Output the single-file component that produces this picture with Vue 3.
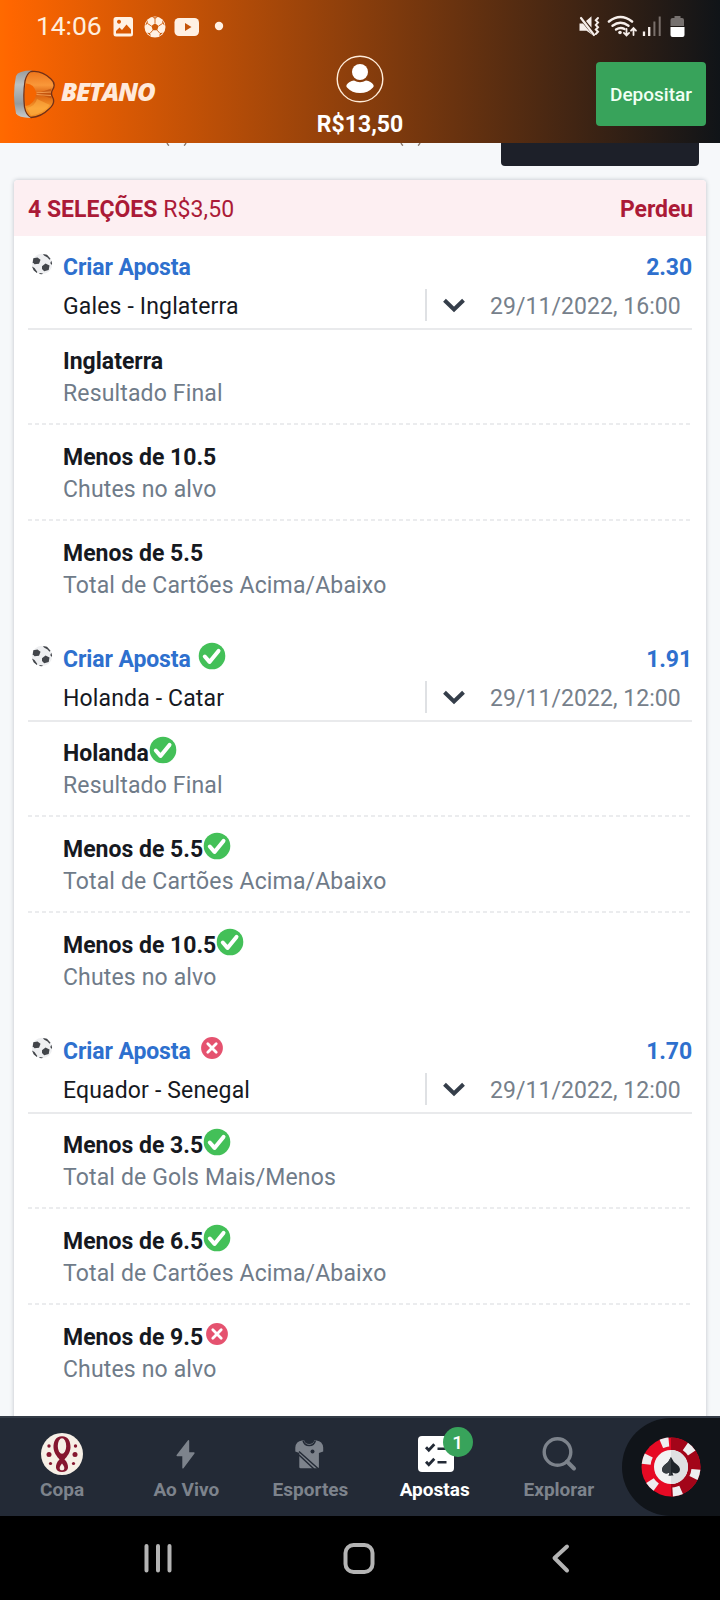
<script setup>
const events = [
  {
    match: 'Gales - Inglaterra', odds: '2.30', date: '29/11/2022, 16:00', status: null,
    picks: [
      { name: 'Inglaterra', market: 'Resultado Final', status: null },
      { name: 'Menos de 10.5', market: 'Chutes no alvo', status: null },
      { name: 'Menos de 5.5', market: 'Total de Cartões Acima/Abaixo', status: null },
    ],
  },
  {
    match: 'Holanda - Catar', odds: '1.91', date: '29/11/2022, 12:00', status: 'won',
    picks: [
      { name: 'Holanda', market: 'Resultado Final', status: 'won' },
      { name: 'Menos de 5.5', market: 'Total de Cartões Acima/Abaixo', status: 'won' },
      { name: 'Menos de 10.5', market: 'Chutes no alvo', status: 'won' },
    ],
  },
  {
    match: 'Equador - Senegal', odds: '1.70', date: '29/11/2022, 12:00', status: 'lost',
    picks: [
      { name: 'Menos de 3.5', market: 'Total de Gols Mais/Menos', status: 'won' },
      { name: 'Menos de 6.5', market: 'Total de Cartões Acima/Abaixo', status: 'won' },
      { name: 'Menos de 9.5', market: 'Chutes no alvo', status: 'lost' },
    ],
  },
]
</script>

<template>
  <div class="screen">
    <header class="top">
      <div class="status">
        <span class="clock">14:06</span>
        <svg class="st-left" width="115" height="24" viewBox="0 0 115 24">
          <g fill="#fff1e4">
            <path fill-rule="evenodd" d="M3 2h14.500q2.500 0 2.500 2.500v14.500q0 2.500-2.500 2.500H3q-2.500 0-2.500-2.500V4.500Q.5 2 3 2zM3 18.500h15v-4l-4.500-5-4.500 5.500-2.500-2.500L3 16zM6 4.800a2 2 0 1 0 .01 0z" />
            <circle cx="42" cy="12" r="10.500" />
            <rect x="61.500" y="3" width="24.500" height="18" rx="4.500" />
            <circle cx="106" cy="11" r="4.200" />
          </g>
          <path d="M72 8l6.500 4-6.500 4z" fill="#c55409" />
          <g fill="#cf5a08">
            <path d="M42 8.300l3.600 2.600-1.400 4.300h-4.400l-1.400-4.300z" />
            <path d="M39.300 2.200l2.700 1.900 2.700-1.900zM32.200 10.500l2.600-2-.3-3.200zM51.800 10.500l-2.600-2 .3-3.200zM34 17.800l3 .2.800 3zM50 17.800l-3 .2-.8 3z" />
          </g>
          <path d="M42 8V4M45.600 11l3.600-2.300M44.200 15.200l2.600 3M39.800 15.200l-2.600 3M38.400 11l-3.600-2.300" stroke="#cf5a08" stroke-width=".9" />
        </svg>
        <svg class="st-right" width="110" height="26" viewBox="0 0 110 26">
          <g fill="none" stroke="#f6eeea" stroke-width="2.200" stroke-linecap="round">
            <path d="M3 4l13 17" />
            <path d="M20 4l-2.200 2.300 2.200 2.300-2.200 2.300 2.200 2.300-2.200 2.300 2.200 2.300-2.200 2.200" stroke-width="2" />
            <path d="M31 7.500q11.500-9 23 0" stroke-width="2.600" />
            <path d="M34.500 11.800q8-6 16 0M38 15.600q4.500-3 8.500-.500" stroke-width="2.400" />
            <path d="M48.500 15v6.200m-2.600-2.300l2.600 2.600 2.600-2.600M55.500 21v-6.800m-2.500 2.500l2.500-2.600 2.500 2.600" stroke-width="1.800" />
          </g>
          <path d="M1.500 9.500H5l9.500 11.500-6-4.300h-7zM8 7l5.500-4.800v11.500z" fill="#f6eeea" />
          <circle cx="42" cy="18.500" r="1.800" fill="#f6eeea" />
          <path d="M66 17.500v4.500M71.200 13v9" stroke="#f6eeea" stroke-width="2.300" />
          <path d="M76.400 7.500v14.500M81.700 2.500v19.500" stroke="#7a706b" stroke-width="2" />
          <path d="M96.500 2h6v2h1.500q2 0 2 2v6H92.500V6q0-2 2-2h2z" fill="#76716f" />
          <path d="M92.500 13H106.500v8q0 2-2 2h-10q-2 0-2-2z" fill="#fff" />
        </svg>
      </div>
      <div class="brandbar">
        <div class="brand">
          <svg width="44" height="50" viewBox="0 0 44 50">
            <defs>
              <linearGradient id="metal" x1="0" x2="0" y1="0" y2="1">
                <stop offset="0" stop-color="#999c9d" /><stop offset=".3" stop-color="#bcc1c2" />
                <stop offset=".7" stop-color="#959b9e" /><stop offset="1" stop-color="#c8cbcc" />
              </linearGradient>
              <linearGradient id="amber" x1="0" x2="0" y1="0" y2="1">
                <stop offset="0" stop-color="#ee761b" /><stop offset=".3" stop-color="#f9983a" />
                <stop offset=".5" stop-color="#d8600f" /><stop offset=".8" stop-color="#f99a2c" /><stop offset="1" stop-color="#ee8a20" />
              </linearGradient>
            </defs>
            <path d="M19 .5Q5 .5 3 6Q-1 25 3 43.500Q5 47.500 18 48z" fill="url(#metal)" />
            <path d="M18 1.500Q29 0 38 9Q43.500 14 39.500 20Q37.500 23.500 39.500 27Q43 33 36 39Q28 47 18 47.500Q13 45 11.500 37Q10 24 12 11Q14 3 18 1.500z" fill="url(#amber)" stroke="#713018" stroke-width="1.300" />
            <path d="M12.500 13.500Q21 13 23.500 23.500Q21 35 12.500 36Q11 24 12.500 13.500z" fill="#f56500" />
            <path d="M23.500 23.500L38.500 18.500 37.800 23.500 38.500 28.500z" fill="#b54b0c" opacity=".6" />
            <path d="M23.500 22.800L38 22M23.500 24.500L38 25.500" stroke="#f6a253" stroke-width=".9" />
            <path d="M14 38Q22 36 24 29l13 6Q30 44 18 45.500z" fill="#ffb64a" opacity=".5" />
          </svg>
          <span class="wordmark">BETANO</span>
        </div>
        <div class="account">
          <svg width="48" height="48" viewBox="0 0 48 48">
            <circle cx="24" cy="24" r="22.800" fill="none" stroke="#ffecd9" stroke-width="1.400" />
            <circle cx="24" cy="17" r="8" fill="#fff" />
            <path d="M10.500 30Q13 26 18 25.500Q24 29 30 25.500Q35 26 37.500 30Q38 31.500 37 32.500Q32 38 24 38T11 32.500Q10 31.500 10.500 30z" fill="#fff" />
          </svg>
          <span class="balance">R$13,50</span>
        </div>
        <button class="deposit">Depositar</button>
      </div>
    </header>

    <main class="page">
      <div class="tabs">
        <svg class="cut" width="260" height="3" viewBox="0 0 260 3">
          <path d="M2 0q.8 1.800 2 2.600M21 0q-.8 1.800-2 2.600M236 0q.8 1.800 2 2.600M255 0q-.8 1.800-2 2.600" fill="none" stroke="#8b7b70" stroke-width="1.500" />
        </svg>
        <div class="dark-tab"></div>
      </div>
      <section class="slip">
        <div class="slip-head">
          <span><b>4 SELEÇÕES</b> <span class="stake">R$3,50</span></span>
          <b class="result">Perdeu</b>
        </div>
        <article v-for="ev in events" :key="ev.match" class="event">
          <div class="event-head">
            <div class="bet-row">
              <svg class="ball" width="22" height="22" viewBox="0 0 22 22">
                <circle cx="11" cy="11" r="10.200" fill="#eeeff1" />
                <g fill="#42454a">
                  <path d="M11 13.200l3.500-2.700 4 2-.8 4.600-4.500 1.200-2.200-2.200z" />
                  <path d="M2.300 5.300L6.500 4.500l3 2.300-1.500 4-4.500.5-1.700-2z" />
                  <path d="M12 .9l4 .9 3.500 4-1 1-2-2.400-3.500-1.800zM1 13.500l2.500 1.500 2.800 4-.5 1-3.200-2.800zM20.300 7.800l.8 2.700-.6 1.500-1.200-2zM8.500 20l3.500.5-1 .8-2.500-.3z" />
                </g>
              </svg>
              <span class="bet-title">Criar Aposta</span>
              <svg v-if="ev.status === 'won'" class="mark gap" width="28" height="28" viewBox="0 0 28 28">
                <circle cx="14" cy="14" r="13.300" fill="#43c058" />
                <path d="M6.800 14.500l4.700 5.400 9-11" fill="none" stroke="#fff" stroke-width="4" stroke-linecap="round" stroke-linejoin="round" />
              </svg>
              <svg v-if="ev.status === 'lost'" class="mark gap" width="28" height="28" viewBox="0 0 28 28">
                <circle cx="14" cy="14" r="10.900" fill="#e5526f" />
                <path d="M9.800 9.800l8.400 8.400M18.200 9.800l-8.400 8.400" stroke="#fff" stroke-width="2.800" stroke-linecap="round" />
              </svg>
              <span class="odds">{{ ev.odds }}</span>
            </div>
            <div class="match-row">
              <span class="match">{{ ev.match }}</span>
              <div class="when">
                <svg width="24" height="18" viewBox="0 0 24 18">
                  <path d="M2.500 4.300L12 13.500l9.500-9.200" fill="none" stroke="#353e4a" stroke-width="4" />
                </svg>
                <span class="date">{{ ev.date }}</span>
              </div>
            </div>
          </div>
          <ul class="picks">
            <li v-for="p in ev.picks" :key="p.name">
              <div class="pick-name">
                <span>{{ p.name }}</span>
                <svg v-if="p.status === 'won'" class="mark" width="28" height="28" viewBox="0 0 28 28">
                  <circle cx="14" cy="14" r="13.300" fill="#43c058" />
                  <path d="M6.800 14.500l4.700 5.400 9-11" fill="none" stroke="#fff" stroke-width="4" stroke-linecap="round" stroke-linejoin="round" />
                </svg>
                <svg v-if="p.status === 'lost'" class="mark" width="28" height="28" viewBox="0 0 28 28">
                  <circle cx="14" cy="14" r="10.900" fill="#e5526f" />
                  <path d="M9.800 9.800l8.400 8.400M18.200 9.800l-8.400 8.400" stroke="#fff" stroke-width="2.800" stroke-linecap="round" />
                </svg>
              </div>
              <div class="market">{{ p.market }}</div>
            </li>
          </ul>
        </article>
      </section>
    </main>

    <nav class="tabbar">
      <a class="tab">
        <svg width="44" height="44" viewBox="0 0 44 44">
          <circle cx="22" cy="22" r="21" fill="#f6efe6" />
          <path d="M22 4.300C15.500 4.300 13.300 10 13.500 15.500C13.800 21 17 24.500 19.500 27.500C17 29.500 15.700 33 16 36Q17 40 22 40T28 36C28.300 33 27 29.500 24.500 27.500C27 24.500 30.200 21 30.500 15.500C30.700 10 28.500 4.300 22 4.300z" fill="#85162f" />
          <ellipse cx="22" cy="14" rx="4.200" ry="7.800" fill="#f6efe6" />
          <path d="M22 31.500q-3.500 4-1.800 6.200 1.800 1.300 3.600 0 1.700-2.200-1.800-6.200z" fill="#f6efe6" />
          <g fill="#85162f"><circle cx="9" cy="14" r="1.700" /><circle cx="35.500" cy="14" r="1.700" /><circle cx="9" cy="22.500" r="2.500" /><circle cx="35" cy="22.500" r="2.500" /><circle cx="10.500" cy="31.500" r="1.600" /><circle cx="33.500" cy="31.500" r="1.600" /></g>
        </svg>
        <span>Copa</span>
      </a>
      <a class="tab">
        <svg width="44" height="44" viewBox="1 0 44 44">
          <path d="M25 8.300L13.600 23q-.5 1 .5 1.300h5.200V36q.3 1 1.200.2L31.500 21.500q.5-1-.5-1.300h-4.800V8.800q-.3-1.200-1.200-.5z" fill="#7d838c" />
        </svg>
        <span>Ao Vivo</span>
      </a>
      <a class="tab">
        <svg width="44" height="44" viewBox="1 0 44 44">
          <path d="M15 8.500Q9 9 8.300 15.500v4l4 1.500V35q0 1.300 1.300 1.300h17q1.300 0 1.300-1.300V21l4.300-1.500v-4Q35.500 9 29.500 8.500l-2-.5q-1 4-5.300 4T17 8z" fill="#7d838c" />
          <path d="M16 8.500q1.300 5 6.200 5t6.200-5M12 19.500l19.500 17.500M12 23l15 14" fill="none" stroke="#232a36" stroke-width="1.500" />
          <circle cx="25.500" cy="19.500" r="2" fill="#232a36" />
        </svg>
        <span>Esportes</span>
      </a>
      <a class="tab active">
        <svg width="44" height="44" viewBox="0 0 44 44">
          <rect x="5" y="4" width="36" height="36" rx="4" fill="#fff" />
          <path d="M13 15.200l2.800 3 5.500-6M13 29.800l2.800 3 5.500-6" fill="none" stroke="#232a36" stroke-width="2.800" />
          <path d="M24.500 16.800h9M24.500 30.300h9" stroke="#232a36" stroke-width="2.600" />
        </svg>
        <i class="badge">1</i>
        <span>Apostas</span>
      </a>
      <a class="tab">
        <svg width="44" height="44" viewBox="0 0 44 44">
          <circle cx="20.500" cy="20" r="13.300" fill="none" stroke="#7d838c" stroke-width="3.400" />
          <path d="M30 29.500l7 7" stroke="#7d838c" stroke-width="4" stroke-linecap="round" />
        </svg>
        <span>Explorar</span>
      </a>
      <div class="casino">
        <svg width="60" height="60" viewBox="0 0 60 60">
          <circle cx="30" cy="30" r="29.500" fill="#e60a24" />
          <path d="M30 .5a29.500 29.500 0 0 1 0 59z" fill="#a30519" />
          <circle cx="30" cy="30" r="25" fill="none" stroke="#eeeef0" stroke-width="9" stroke-dasharray="9 17.180" stroke-dashoffset="4.500" transform="rotate(-105 30 30)" />
          <circle cx="30" cy="30" r="17" fill="#f2f2f3" />
          <path d="M30 13a17 17 0 0 1 0 34z" fill="#dfe0e2" />
          <path d="M30 20Q28 25 23.500 28Q20 31 21.500 34.500Q24 38 28.500 35.500Q28.500 37 27.500 38.500H32.500Q31.500 37 31.500 35.500Q36 38 38.500 34.500Q40 31 36.500 28Q32 25 30 20z" fill="#1e2329" />
          <path d="M30 20v18.500h-2.500q1-1.500 1-3Q24 38 21.500 34.500Q20 31 23.500 28Q28 25 30 20z" fill="#383d42" />
        </svg>
      </div>
    </nav>

    <footer class="sysnav">
      <svg width="720" height="101" viewBox="0 0 720 101" fill="none" stroke="#b4b4b4" stroke-linecap="round" stroke-linejoin="round">
        <path d="M146.500 30v24.500M158 30v24.500M169.500 30v24.500" stroke-width="4" />
        <rect x="345.500" y="29" width="27" height="27" rx="8" stroke-width="4" />
        <path d="M567 30.500L554.500 42 567 54.500" stroke-width="4" />
      </svg>
    </footer>
  </div>
</template>

<style>
body { margin: 0; overflow: hidden; }
</style>

<style scoped>
* { box-sizing: border-box; }
.screen { width: 720px; height: 1600px; display: flex; flex-direction: column; overflow: hidden; background: #f6f8fa; font-family: Roboto, sans-serif; font-size: 23px; letter-spacing: .15px; }
.top { height: 143px; flex: none; background: linear-gradient(90deg, #ff6a00 0, #ff6600 1.500%, #101418 100%); display: flex; flex-direction: column; }
.status { height: 52px; display: flex; align-items: center; padding: 0 36px; color: #ffeedd; }
.clock { font-size: 26.500px; letter-spacing: -.1px; width: 77px; margin-top: -1px; }
.st-left { margin: 2px 0 0 0; }
.st-right { margin: 2px -4px 0 auto; }
.brandbar { height: 91px; display: grid; grid-template-columns: 1fr 160px 1fr; }
.brand { display: flex; align-items: flex-start; padding: 18px 0 0 13px; }
.wordmark { font-family: "Open Sans", sans-serif; font-weight: 800; font-style: italic; font-size: 25.500px; line-height: 30px; letter-spacing: -1.200px; color: #ffeadb; margin: 6px 0 0 4px; }
.account { display: flex; flex-direction: column; align-items: center; color: #fff; padding-top: 3px; }
.balance { font-weight: 700; font-size: 23px; line-height: 30px; margin-top: 7px; letter-spacing: 0; }
.deposit { justify-self: end; width: 110px; height: 64px; margin: 10px 14px 0 0; padding: 0; border: 0; border-radius: 4px; background: #38a35b; color: #f1fff4; font: 500 19px Roboto, sans-serif; letter-spacing: 0; }
.page { flex: 1; min-height: 0; overflow: hidden; display: flex; flex-direction: column; }
.tabs { height: 37px; flex: none; display: flex; justify-content: space-between; padding: 0 21px 0 165px; }
.dark-tab { width: 198px; height: 23px; background: #1d2029; border-radius: 0 0 4px 4px; }
.slip { margin: 0 14px; flex: none; height: 1300px; background: #fff; border-radius: 4px 4px 0 0; box-shadow: 0 0 4px rgba(20, 30, 50, .25); }
.slip-head { height: 56px; display: flex; justify-content: space-between; padding: 0 13px 0 14px; line-height: 59px; background: #fdeff2; color: #ab1a37; border-radius: 4px 4px 0 0; letter-spacing: 0; }
.slip-head b { font-weight: 700; }
.stake { letter-spacing: .15px; }
.result { letter-spacing: -.1px; }
.event { padding: 0 14px 11px; }
.event-head { height: 94px; padding: 15px 0 7px; border-bottom: 2px solid #e9eaec; }
.bet-row { height: 32px; line-height: 33px; display: flex; color: #2e70ce; font-weight: 700; letter-spacing: -.1px; }
.ball { margin: 2px 11px 0 3px; }
.bet-title { margin-left: -1px; }
.mark { margin-top: -1px; flex: none; }
.mark.gap { margin: -1px 0 0 7px; }
.odds { margin-left: auto; }
.match-row { height: 32px; line-height: 35px; margin-top: 6px; display: flex; justify-content: space-between; padding-left: 35px; color: #16191f; }
.when { height: 32px; width: 267px; border-left: 2px solid #dfe1e4; display: flex; align-items: center; padding-left: 15px; color: #76808b; }
.date { margin-left: 24px; white-space: nowrap; line-height: 35px; padding-top: 2px; letter-spacing: .05px; }
.picks { list-style: none; margin: -1px 0 0; padding: 0; }
.picks li { height: 96px; padding: 16px 0 0 35px; line-height: 33px; background: repeating-linear-gradient(90deg, #ebecee 0 4px, transparent 4px 7px) 0 94px / 100% 2px no-repeat; }
.picks li:last-child { background: none; }
.pick-name { height: 32px; display: flex; font-weight: 700; color: #16191f; letter-spacing: 0; }
.market { color: #6f7b89; }
.tabbar { height: 100px; flex: none; background: #232a36; border-top: 2px solid #343c47; display: flex; }
.tab { width: 124.200px; position: relative; display: flex; flex-direction: column; align-items: center; padding-top: 14px; color: #7d838c; font-weight: 700; font-size: 19px; line-height: 28px; letter-spacing: 0; }
.tab.active { color: #fff; }
.badge { position: absolute; left: 70px; top: 9px; width: 30px; height: 30px; border-radius: 50%; background: #38a35b; color: #fff; font-style: normal; font-weight: 500; font-size: 19px; line-height: 32px; text-align: center; }
.casino { width: 98px; height: 98px; flex: none; margin-left: auto; background: #101419; border-radius: 49px 0 0 49px; display: flex; align-items: center; padding-left: 19px; }
.sysnav { height: 84px; flex: none; background: #000; overflow: hidden; }
.sysnav svg { display: block; }
</style>
